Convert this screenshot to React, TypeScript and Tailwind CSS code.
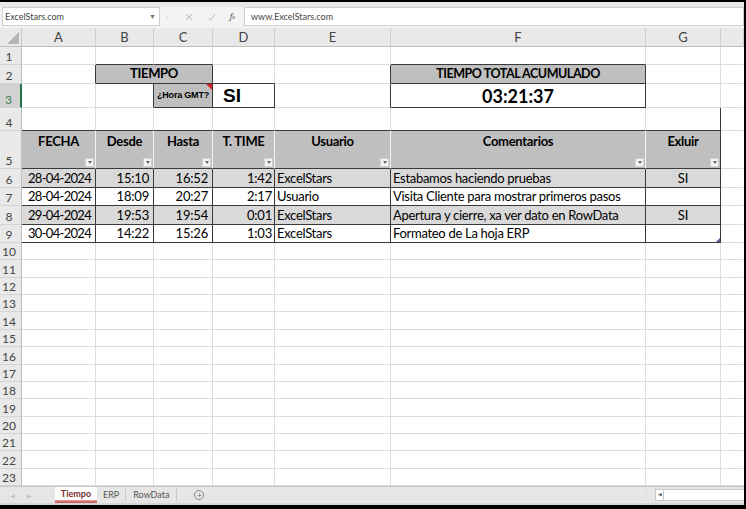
import React from 'react';

const COLS = 'grid grid-cols-[22px_74px_58px_59px_62px_116px_255px_75px_1fr]';
const FONT = { fontFamily: 'Lato, "Open Sans", sans-serif' };

type Edge = 'grid' | 'dark' | 'white' | 'none';

function Cell({
  children,
  r = 'grid',
  b = 'grid',
  className = '',
}: {
  children?: React.ReactNode;
  r?: Edge;
  b?: Edge;
  className?: string;
}) {
  const rc =
    r === 'dark' ? 'border-r-[#3a3a3a]' : r === 'white' ? 'border-r-[#f2f2f2]' : r === 'none' ? 'border-r-transparent' : 'border-r-[#dcdcdc]';
  const bc =
    b === 'dark' ? 'border-b-[#3a3a3a]' : b === 'white' ? 'border-b-[#f2f2f2]' : b === 'none' ? 'border-b-transparent' : 'border-b-[#dcdcdc]';
  return (
    <div className={`border-r border-b ${rc} ${bc} min-w-0 overflow-hidden whitespace-nowrap ${className}`}>{children}</div>
  );
}

function RowHead({ n, active = false }: { n: number; active?: boolean }) {
  return (
    <div
      className={`flex items-end justify-center pr-[3px] pb-[1px] text-[12px] leading-none border-b border-r ${
        active ? 'bg-[#d2d2d2] text-[#3f7a55] border-r-[#217346] border-r-2' : 'bg-[#e9e9e9] text-[#444] border-r-[#bdbdbd]'
      } border-b-[#d4d4d4]`}
    >
      {n}
    </div>
  );
}

function FilterBtn() {
  return (
    <div className="self-end w-[9px] h-[9px] mb-[1px] mr-[1px] bg-[#f4f4f4] border border-[#d0d0d0] flex items-center justify-center">
      <div className="w-0 h-0 border-l-[2px] border-r-[2px] border-t-[3px] border-l-transparent border-r-transparent border-t-[#666]" />
    </div>
  );
}

function HeadCell({ label, r = 'white' as Edge }: { label: string; r?: Edge }) {
  return (
    <Cell r={r} b="dark" className="bg-[#bfbfbf] flex flex-col justify-between">
      <div className="text-center font-bold text-[13px] tracking-[-0.3px] text-black pt-[2px] leading-[16px]">{label}</div>
      <FilterBtn />
    </Cell>
  );
}

const rows = [
  { f: '28-04-2024', d: '15:10', h: '16:52', t: '1:42', u: 'ExcelStars', c: 'Estabamos haciendo pruebas', x: 'SI', gray: true },
  { f: '28-04-2024', d: '18:09', h: '20:27', t: '2:17', u: 'Usuario', c: 'Visita Cliente para mostrar primeros pasos', x: '', gray: false },
  { f: '29-04-2024', d: '19:53', h: '19:54', t: '0:01', u: 'ExcelStars', c: 'Apertura y cierre, xa ver dato en RowData', x: 'SI', gray: true },
  { f: '30-04-2024', d: '14:22', h: '15:26', t: '1:03', u: 'ExcelStars', c: 'Formateo de La hoja ERP', x: '', gray: false },
];

export default function App() {
  return (
    <div
      className="w-[746px] h-[509px] overflow-hidden bg-white border-t-2 border-r-2 border-b-4 border-black flex flex-col text-black"
      style={FONT}
    >
      {/* Top strip */}
      <div className="h-[5px] bg-[#e8e8e8] shrink-0" />

      {/* Formula bar */}
      <div className="h-[19px] shrink-0 bg-[#f3f3f3] flex items-stretch text-[9px] text-[#444]">
        <div className="ml-[2px] w-[158px] bg-white border border-[#d0d0d0] flex items-center justify-between pl-[2px] pr-[3px]">
          <span>ExcelStars.com</span>
          <span className="text-[7px] text-[#777]">▼</span>
        </div>
        <div className="w-[14px] flex items-center justify-center text-[#c8c8c8] text-[9px]">⋮</div>
        <div className="w-[68px] flex items-center justify-around pl-[4px] text-[#bdbdbd]">
          <svg width="8" height="8" viewBox="0 0 8 8">
            <path d="M1 1 L7 7 M7 1 L1 7" stroke="#b8b8b8" strokeWidth="1" />
          </svg>
          <svg width="9" height="8" viewBox="0 0 9 8">
            <path d="M1 4.5 L3.5 7 L8 1" stroke="#b8b8b8" strokeWidth="1" fill="none" />
          </svg>
          <span className="italic text-[#555] text-[9px] font-serif">
            f<span className="text-[6px]">x</span>
          </span>
        </div>
        <div className="flex-1 ml-[2px] bg-white border border-[#d0d0d0] flex items-center pl-[6px]">
          www.ExcelStars.com
        </div>
      </div>
      <div className="h-[2px] shrink-0 bg-[#f3f3f3]" />

      {/* Column headers */}
      <div className={`${COLS} h-[19px] shrink-0 bg-[#e9e9e9] border-b border-[#bdbdbd] text-[13px] text-[#444]`}>
        <div className="relative border-r border-[#c8c8c8]">
          <svg className="absolute right-[2px] bottom-[2px]" width="12" height="12" viewBox="0 0 12 12">
            <path d="M12 0 L12 12 L0 12 Z" fill="#b6b6b6" />
          </svg>
        </div>
        {['A', 'B', 'C', 'D', 'E', 'F', 'G', ''].map((l, i) => (
          <div key={i} className="flex items-center justify-center border-r border-[#cfcfcf] leading-none">
            {l}
          </div>
        ))}
      </div>

      {/* Row 1 */}
      <div className={`${COLS} h-[18px] shrink-0`}>
        <RowHead n={1} />
        <Cell />
        <Cell b="dark" />
        <Cell b="dark" />
        <Cell />
        <Cell />
        <Cell b="dark" />
        <Cell />
        <Cell r="none" />
      </div>

      {/* Row 2 */}
      <div className={`${COLS} h-[19px] shrink-0`}>
        <RowHead n={2} />
        <Cell r="dark" />
        <Cell r="dark" b="dark" className="col-span-2 bg-[#bfbfbf] flex items-center justify-center font-bold text-[13px] tracking-[-0.3px]">
          TIEMPO
        </Cell>
        <Cell b="dark" />
        <Cell r="dark" />
        <Cell r="dark" b="dark" className="bg-[#bfbfbf] flex items-center justify-center font-bold text-[12.5px] tracking-[-0.45px]">
          TIEMPO TOTAL ACUMULADO
        </Cell>
        <Cell />
        <Cell r="none" />
      </div>

      {/* Row 3 */}
      <div className={`${COLS} h-[24px] shrink-0`}>
        <RowHead n={3} active />
        <Cell />
        <Cell r="dark" />
        <Cell r="dark" b="dark" className="relative bg-[#bfbfbf] flex items-center justify-center">
          <span className="font-bold text-[9px] tracking-[-0.2px]" style={{ fontFamily: '"Liberation Sans", Arial, sans-serif' }}>
            ¿Hora GMT?
          </span>
          <svg className="absolute right-0 top-0" width="6" height="6" viewBox="0 0 6 6">
            <path d="M0 0 L6 0 L6 6 Z" fill="#e02020" />
          </svg>
        </Cell>
        <Cell r="dark" b="dark" className="flex items-center pl-[10px]">
          <span className="font-bold text-[19px] leading-none" style={{ fontFamily: '"Liberation Sans", Arial, sans-serif' }}>
            SI
          </span>
        </Cell>
        <Cell r="dark" />
        <Cell r="dark" b="dark" className="flex items-center justify-center font-bold text-[18px] leading-none">
          03:21:37
        </Cell>
        <Cell />
        <Cell r="none" />
      </div>

      {/* Row 4 */}
      <div className={`${COLS} h-[23px] shrink-0`}>
        <RowHead n={4} />
        <Cell b="dark" />
        <Cell b="dark" />
        <Cell b="dark" />
        <Cell b="dark" />
        <Cell b="dark" />
        <Cell b="dark" />
        <Cell b="dark" r="dark" />
        <Cell r="none" />
      </div>

      {/* Row 5 - table header */}
      <div className={`${COLS} h-[38px] shrink-0`}>
        <RowHead n={5} />
        <HeadCell label="FECHA" />
        <HeadCell label="Desde" />
        <HeadCell label="Hasta" />
        <HeadCell label="T. TIME" />
        <HeadCell label="Usuario" />
        <HeadCell label="Comentarios" />
        <HeadCell label="Exluir" r="dark" />
        <Cell r="none" />
      </div>

      {/* Data rows */}
      {rows.map((row, i) => {
        const bg = row.gray ? 'bg-[#d9d9d9]' : 'bg-white';
        const h = i % 2 === 0 ? 'h-[19px]' : 'h-[18px]';
        const base = `${bg} flex items-center text-[13px] leading-none`;
        return (
          <div key={i} className={`${COLS} ${h} shrink-0`}>
            <RowHead n={6 + i} />
            <Cell r="dark" b="dark" className={`${base} justify-end pr-[4px] tracking-[-0.7px]`}>
              {row.f}
            </Cell>
            <Cell r="dark" b="dark" className={`${base} justify-end pr-[4px] tracking-[-0.2px]`}>
              {row.d}
            </Cell>
            <Cell r="dark" b="dark" className={`${base} justify-end pr-[4px] tracking-[-0.2px]`}>
              {row.h}
            </Cell>
            <Cell r="dark" b="dark" className={`${base} justify-end pr-[2px] tracking-[-0.2px]`}>
              {row.t}
            </Cell>
            <Cell r="dark" b="dark" className={`${base} pl-[2px] tracking-[-0.3px]`}>
              {row.u}
            </Cell>
            <Cell r="dark" b="dark" className={`${base} pl-[2px] tracking-[-0.3px]`}>
              {row.c}
            </Cell>
            <Cell r="dark" b="dark" className={`${base} justify-center relative`}>
              {row.x}
              {i === rows.length - 1 && (
                <svg className="absolute right-0 bottom-0" width="4" height="4" viewBox="0 0 4 4">
                  <path d="M4 0 L4 4 L0 4 Z" fill="#4d5b9b" />
                </svg>
              )}
            </Cell>
            <Cell r="none" />
          </div>
        );
      })}

      {/* Empty rows 10-23 */}
      {Array.from({ length: 14 }, (_, i) => (
        <div key={i} className={`${COLS} h-[17.36px] shrink-0`}>
          <RowHead n={10 + i} />
          <Cell />
          <Cell />
          <Cell />
          <Cell />
          <Cell />
          <Cell />
          <Cell />
          <Cell r="none" />
        </div>
      ))}

      {/* Sheet tabs */}
      <div className="h-[17px] shrink-0 bg-[#e6e6e6] border-t border-[#c6c6c6] flex items-stretch text-[9px] text-[#555]">
        <div className="w-[50px] flex items-center gap-[12px] pl-[10px] text-[#c4c4c4] text-[6px]">
          <span>◀</span>
          <span>▶</span>
        </div>
        <div className="ml-[5px] w-[42px] bg-white flex flex-col justify-end">
          <div className="text-center font-bold text-[#7a2e2e] leading-[12px]">Tiempo</div>
          <div className="h-[3px] bg-gradient-to-b from-[#e89a9a] to-[#c25454]" />
        </div>
        <div className="flex items-center px-[6px] border-r border-[#c8c8c8] my-[2px]">ERP</div>
        <div className="flex items-center px-[7px] border-r border-[#c8c8c8] my-[2px]">RowData</div>
        <div className="ml-[17px] flex items-center">
          <div className="w-[10px] h-[10px] rounded-full border border-[#8a8a8a] flex items-center justify-center text-[8px] leading-none text-[#666]">
            +
          </div>
        </div>
        <div className="flex-1" />
        <div className="flex items-center text-[#d0d0d0] mr-[4px]">⋮</div>
        <div className="my-[2px] w-[9px] bg-white border border-[#c8c8c8] flex items-center justify-center text-[5px] text-[#666]">
          ◀
        </div>
        <div className="my-[2px] w-[80px] bg-white border-y border-[#c8c8c8]" />
      </div>
      <div className="h-[2px] shrink-0 bg-[#d6d6d6]" />
    </div>
  );
}
